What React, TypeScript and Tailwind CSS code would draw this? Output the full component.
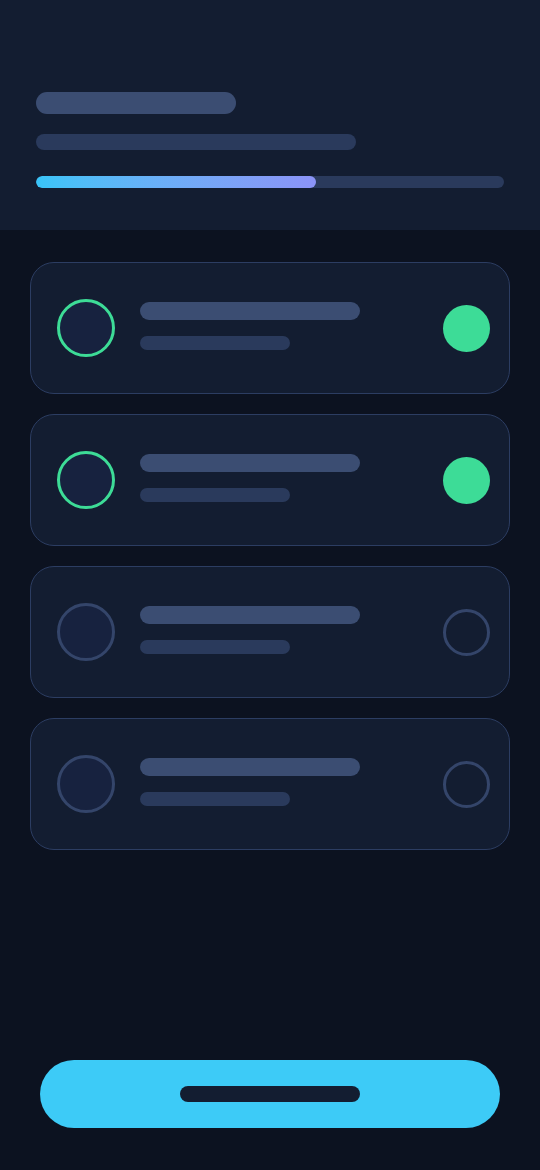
const steps = [
  { done: true },
  { done: true },
  { done: false },
  { done: false },
];

function StepCard({ done }: { done: boolean }) {
  return (
    <div className="flex items-center h-[132px] rounded-[24px] border border-[#2c3d62] bg-[#131d31] pl-[26px] pr-[19px]">
      <div
        className={
          done
            ? "w-[58px] h-[58px] rounded-full border-[3px] border-[#3ddc97] bg-[#17223f] shrink-0"
            : "w-[58px] h-[58px] rounded-full border-[3px] border-[#34456a] bg-[#17223f] shrink-0"
        }
      />
      <div className="flex flex-col gap-4 ml-[25px] mb-1 grow">
        <div className="w-[220px] h-[18px] rounded-full bg-[#3b4d72]" />
        <div className="w-[150px] h-[14px] rounded-full bg-[#2a3a5c]" />
      </div>
      {done ? (
        <div className="w-[47px] h-[47px] rounded-full bg-[#3ddc97] shrink-0" />
      ) : (
        <div className="w-[47px] h-[47px] rounded-full border-[3px] border-[#34456a] shrink-0" />
      )}
    </div>
  );
}

export default function App() {
  return (
    <div className="w-[540px] h-[1170px] flex flex-col bg-[#0c1220]">
      <div className="h-[230px] bg-[#131d31] px-9 pt-[92px]">
        <div className="w-[200px] h-[22px] rounded-full bg-[#3b4d72]" />
        <div className="w-[320px] h-4 rounded-full bg-[#2a3a5c] mt-5" />
        <div className="w-[468px] h-3 rounded-full bg-[#2a3a5c] mt-[26px] overflow-hidden">
          <div className="w-[280px] h-full rounded-full bg-gradient-to-r from-[#38c4f8] to-[#8b93f7]" />
        </div>
      </div>

      <div className="flex flex-col gap-5 px-[30px] pt-8">
        {steps.map((s, i) => (
          <StepCard key={i} done={s.done} />
        ))}
      </div>

      <div className="mt-auto px-10 pb-[42px]">
        <button className="w-full h-[68px] rounded-full bg-[#3dcbf7] flex items-center justify-center">
          <span className="w-[180px] h-4 rounded-full bg-[#131d31]" />
        </button>
      </div>
    </div>
  );
}
